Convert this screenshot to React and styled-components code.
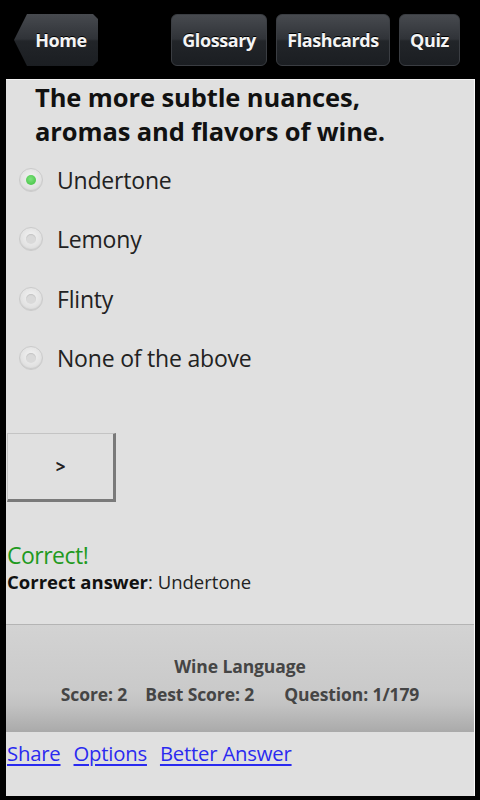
import React, { useState } from 'react';
import styled, { createGlobalStyle } from 'styled-components';

const GlobalStyle = createGlobalStyle`
  html, body {
    margin: 0;
    padding: 0;
    background: #000;
  }
  body {
    font-family: "Open Sans", "DejaVu Sans", sans-serif;
  }
`;

const Screen = styled.div`
  width: 480px;
  height: 800px;
  display: flex;
  flex-direction: column;
  background: #000;
  overflow: hidden;
`;

const TopBar = styled.div`
  height: 79px;
  display: flex;
  align-items: flex-start;
  padding: 14px 20px 0 14px;
  box-sizing: border-box;
  gap: 9px;
`;

const barButton = `
  height: 52px;
  display: flex;
  align-items: center;
  justify-content: center;
  box-sizing: border-box;
  color: #f4f4f4;
  font-family: "Open Sans", sans-serif;
  font-weight: 700;
  font-size: 18px;
  letter-spacing: -0.4px;
  text-shadow: 0 -1px 0 #000;
  background: linear-gradient(#474a4f 0%, #303338 48%, #222529 52%, #1b1e22 100%);
  cursor: pointer;
`;

const HomeButton = styled.div`
  ${barButton}
  width: 84px;
  padding-left: 10px;
  clip-path: polygon(13px 0, 79px 0, 84px 5px, 84px 47px, 79px 52px, 13px 52px, 0 26px);
  margin-right: auto;
`;

const NavButton = styled.div`
  ${barButton}
  width: ${p => p.$w}px;
  border-radius: 6px;
  border: 1px solid #3a3d42;
`;

const Panel = styled.div`
  flex: 1;
  margin: 0 5px 4px 6px;
  background: #e0e0e0;
  border-top: 1px solid #f2f2f2;
  border-right: 1px solid #fafafa;
  display: flex;
  flex-direction: column;
  color: #222;
`;

const Question = styled.h1`
  margin: 0;
  padding: 0 0 0 29px;
  font-family: "Open Sans", sans-serif;
  font-weight: 700;
  font-size: 25.5px;
  line-height: 34px;
  letter-spacing: -0.1px;
  color: #111;
`;

const OptionList = styled.div`
  margin-top: 2px;
  display: flex;
  flex-direction: column;
`;

const OptionRow = styled.label`
  height: 59.5px;
  display: flex;
  align-items: center;
  gap: 14px;
  padding-left: 13px;
  font-family: "Open Sans", sans-serif;
  font-size: 23px;
  letter-spacing: -0.2px;
  color: #222;
  cursor: pointer;
`;

const Radio = styled.span`
  width: 24px;
  height: 24px;
  border-radius: 50%;
  box-sizing: border-box;
  border: 1px solid #cbcbcb;
  background: radial-gradient(circle at 50% 40%, #f3f3f3 0%, #e2e2e2 60%, #d0d0d0 100%);
  box-shadow: inset 0 -1px 1px rgba(0, 0, 0, 0.08);
  display: flex;
  align-items: center;
  justify-content: center;

  &::after {
    content: '';
    width: 10px;
    height: 10px;
    border-radius: 50%;
    background: ${p => (p.$checked ? 'radial-gradient(circle at 45% 40%, #7ee27e, #3cbf3c)' : '#d9d9d9')};
    box-shadow: ${p => (p.$checked ? 'none' : 'inset 0 1px 1px rgba(0,0,0,0.1)')};
  }
`;

const NextButton = styled.button`
  margin: 45px 0 0 1px;
  width: 109px;
  height: 69px;
  background: #e0e0e0;
  border-style: solid;
  border-width: 1px 3px 3px 1px;
  border-color: #c4c4c4 #7a7a7a #7a7a7a #c4c4c4;
  font-family: "Open Sans", sans-serif;
  font-weight: 700;
  font-size: 17px;
  color: #222;
  cursor: pointer;
  padding: 0;
`;

const Verdict = styled.div`
  margin-top: 38px;
  padding-left: 1px;
  font-family: "Open Sans", sans-serif;
  font-size: 23px;
  line-height: 30px;
  letter-spacing: -0.5px;
  color: ${p => (p.$ok ? '#1f9a1f' : '#c02020')};
`;

const Answer = styled.div`
  padding-left: 1px;
  font-family: "Open Sans", sans-serif;
  font-size: 18.5px;
  line-height: 24px;
  letter-spacing: 0;
  color: #222;

  b {
    font-weight: 700;
    color: #111;
  }
`;

const Stats = styled.div`
  margin-top: 30px;
  height: 108px;
  border-top: 1px solid #b4b4b4;
  box-sizing: border-box;
  background: linear-gradient(#d3d3d3 0%, #cacaca 60%, #c2c2c2 75%, #aaaaaa 100%);
  display: flex;
  flex-direction: column;
  align-items: center;
  padding-top: 27px;
  font-family: "Open Sans", sans-serif;
  font-weight: 700;
  font-size: 17.5px;
  line-height: 28px;
  letter-spacing: -0.1px;
  color: #454545;
`;

const ScoreLine = styled.div`
  display: flex;
  gap: 18px;
`;

const QuestionCount = styled.span`
  margin-left: 12px;
`;

const Links = styled.div`
  display: flex;
  gap: 13px;
  padding: 6px 0 0 1px;
`;

const TextLink = styled.a`
  font-family: "Open Sans", sans-serif;
  font-size: 20.3px;
  line-height: 30px;
  letter-spacing: -0.2px;
  color: #2a2af0;
  text-decoration: underline;
  text-underline-offset: 3px;
  cursor: pointer;
`;

const options = ['Undertone', 'Lemony', 'Flinty', 'None of the above'];

export default function App() {
  const [picked, setPicked] = useState('Undertone');

  return (
    <Screen>
      <GlobalStyle />
      <TopBar>
        <HomeButton>Home</HomeButton>
        <NavButton $w={96}>Glossary</NavButton>
        <NavButton $w={114}>Flashcards</NavButton>
        <NavButton $w={61}>Quiz</NavButton>
      </TopBar>
      <Panel>
        <Question>
          The more subtle nuances,
          <br />
          aromas and flavors of wine.
        </Question>
        <OptionList>
          {options.map(o => (
            <OptionRow key={o} onClick={() => setPicked(o)}>
              <Radio $checked={picked === o} />
              {o}
            </OptionRow>
          ))}
        </OptionList>
        <NextButton>&gt;</NextButton>
        <Verdict $ok>Correct!</Verdict>
        <Answer>
          <b>Correct answer</b>: Undertone
        </Answer>
        <Stats>
          <div>Wine Language</div>
          <ScoreLine>
            <span>Score: 2</span>
            <span>Best Score: 2</span>
            <QuestionCount>Question: 1/179</QuestionCount>
          </ScoreLine>
        </Stats>
        <Links>
          <TextLink>Share</TextLink>
          <TextLink>Options</TextLink>
          <TextLink>Better Answer</TextLink>
        </Links>
      </Panel>
    </Screen>
  );
}
